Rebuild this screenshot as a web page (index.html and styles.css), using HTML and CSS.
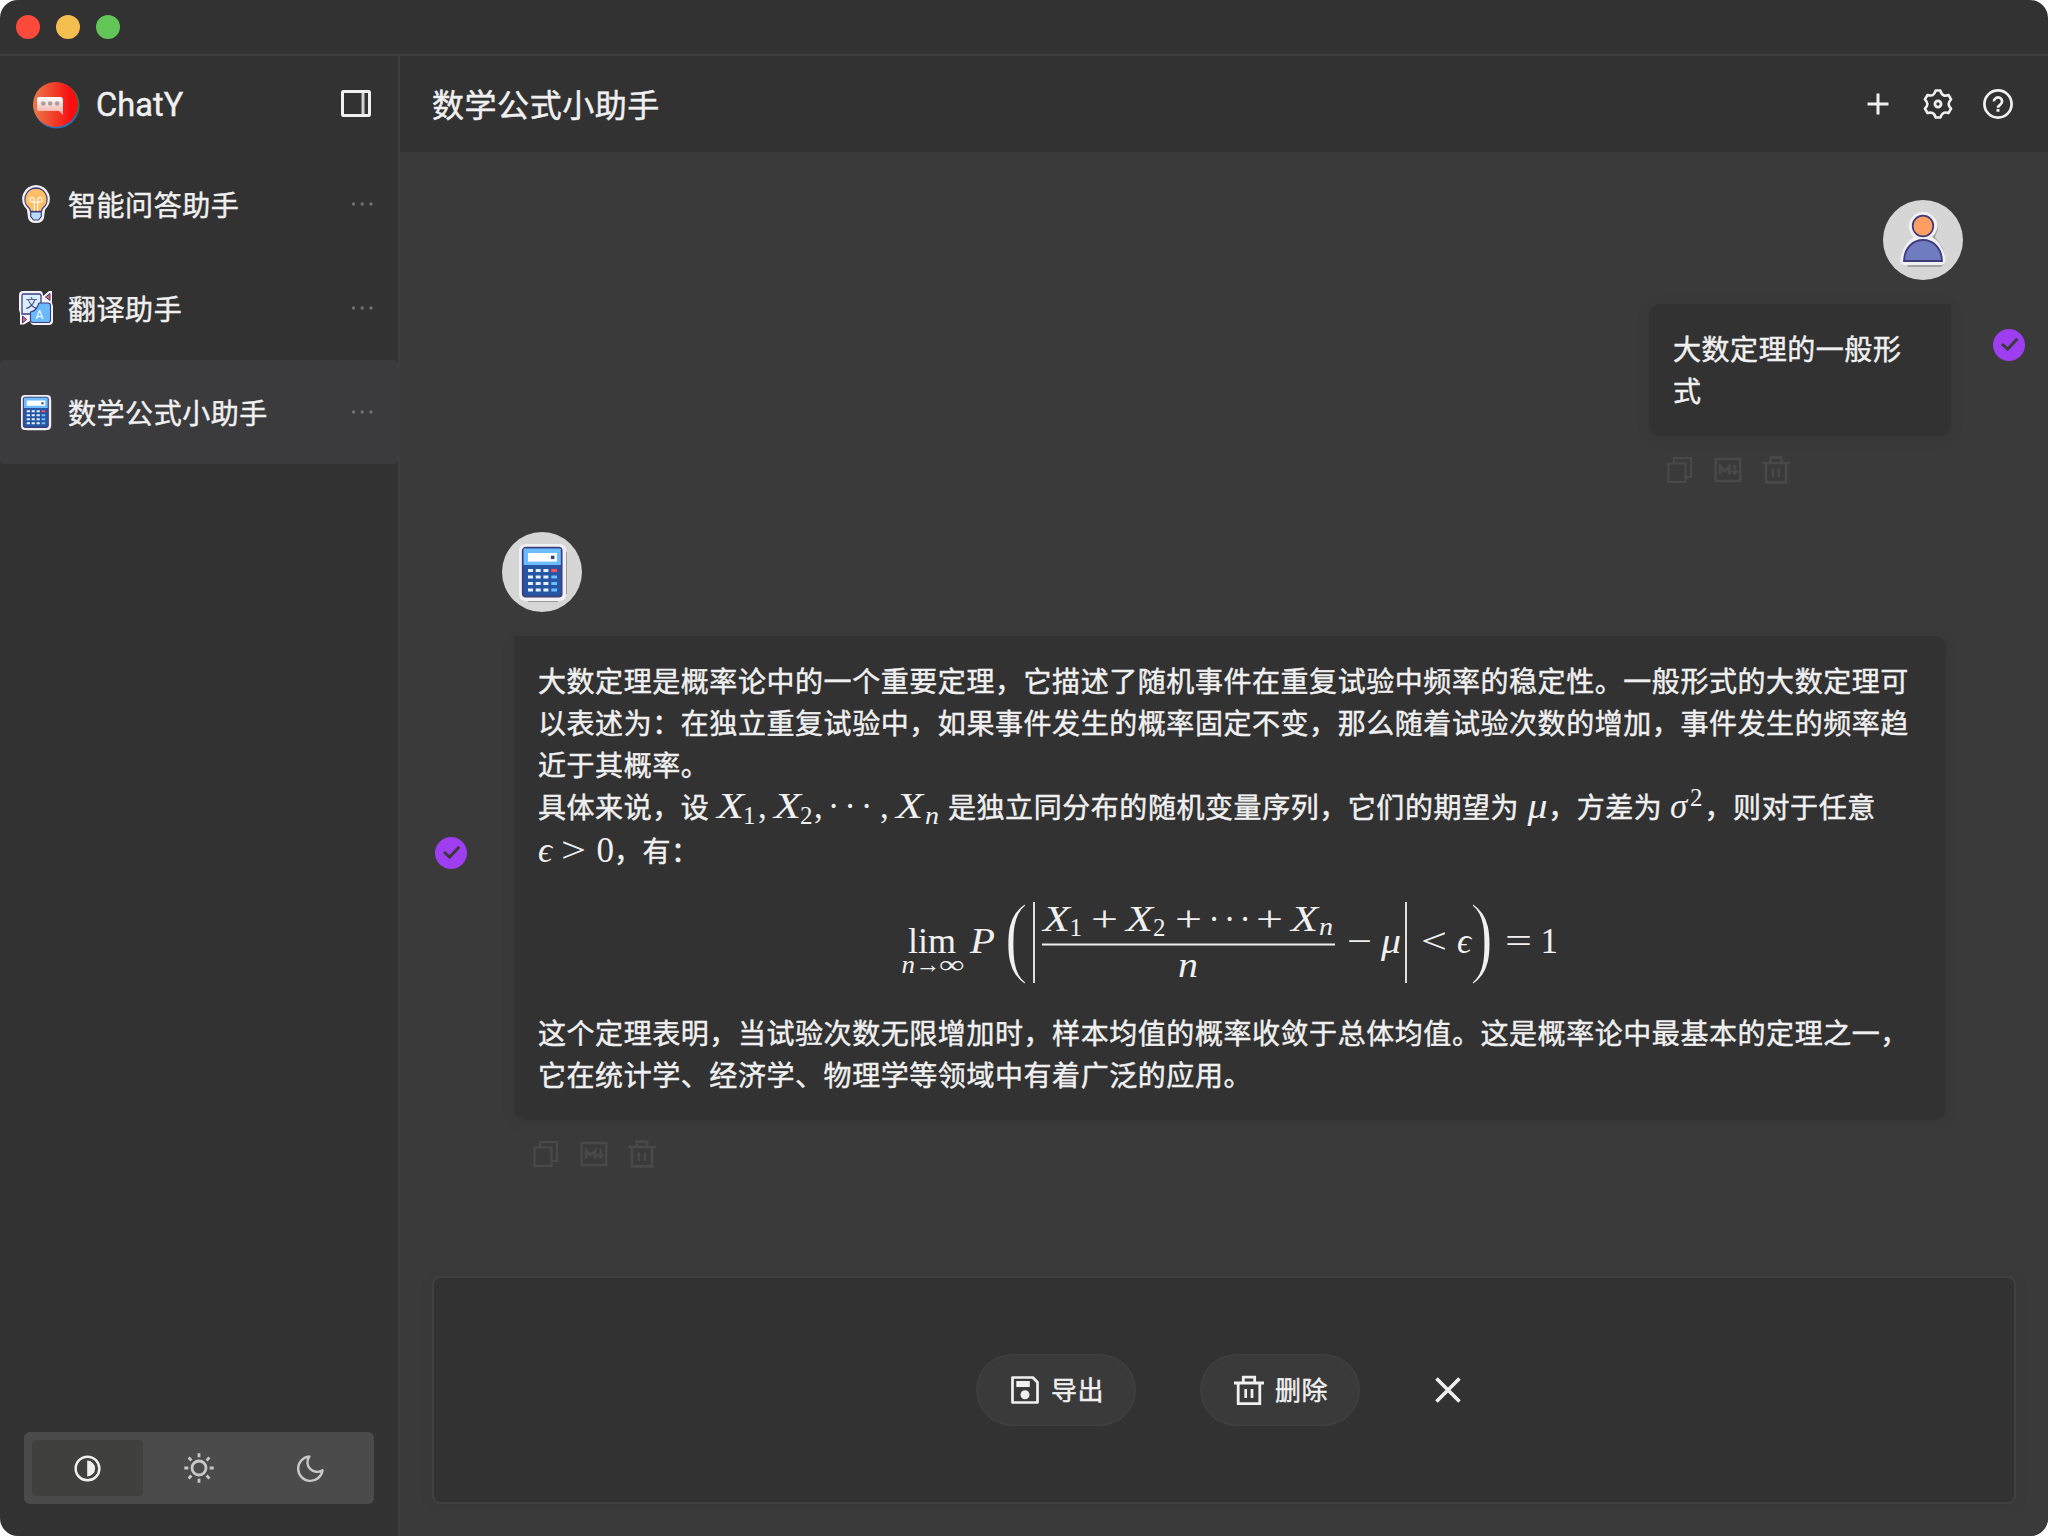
FILE: index.html
```html
<!DOCTYPE html>
<html lang="zh-CN">
<head>
<meta charset="utf-8">
<title>ChatY</title>
<link rel="stylesheet" href="styles.css">
</head>
<body>
<svg class="defs" width="0" height="0">
  <symbol id="calc" viewBox="0 0 48 60">
    <path fill="#9b9b9b" d="M9 56h30v2H9zM46 8h2v42h-2z"/>
    <rect x="0" y="0" width="47" height="57" rx="6" fill="#f1f1f5"/>
    <rect x="3.700" y="3.700" width="39" height="49" rx="3" fill="#2656a3" stroke="#3f3c7c" stroke-width="1.700"/>
    <path fill="#6cbcff" d="M4.600 4.600h37.200V21H4.600z"/>
    <rect x="9" y="9" width="29" height="8.600" fill="#fff"/>
    <rect x="32" y="11.700" width="3.400" height="3.400" fill="#3f3c7c"/>
    <path stroke="#e6f1ff" stroke-width="3.200" stroke-dasharray="5 2.700" d="M9 26.500h22M9 33h22M9 39.500h22M9 46h22"/>
    <path stroke="#6cbcff" stroke-width="3.200" d="M32.300 33H38M32.300 39.500H38M32.300 46H38"/>
    <path stroke="#ff5151" stroke-width="3.200" d="M32.300 26.500H38"/>
  </symbol>
  <symbol id="trash" viewBox="0 0 30 30">
    <path fill="none" stroke="currentColor" stroke-width="2.800" d="M0 7.500h30M4.200 7.500v20.700h21.600V7.500M9.300 7V1.600h11.400V7"/>
    <path stroke="currentColor" stroke-width="2.700" d="M11.700 13.500v9M18 13.500v9"/>
  </symbol>
  <symbol id="copy" viewBox="0 0 27 28">
    <path fill="none" stroke="currentColor" stroke-width="2.200" d="M2 7.500h17V26H2zM7.500 7V2h17v19H19.500"/>
  </symbol>
  <symbol id="markdown" viewBox="0 0 28 28">
    <rect x="1.600" y="3" width="24.600" height="22" fill="none" stroke="currentColor" stroke-width="2.500"/>
    <path fill="none" stroke="currentColor" stroke-width="2.900" d="M6.200 18.500v-8l4.500 4.500 4.500-4.500v8"/>
    <path fill="none" stroke="currentColor" stroke-width="2.300" d="M20.700 9v8M17.600 14.500l3.100 3.200 3.100-3.200"/>
  </symbol>
  <symbol id="more" viewBox="0 0 24 6">
    <g fill="currentColor"><circle cx="2.500" cy="3" r="1.700"/><circle cx="11.200" cy="3" r="1.700"/><circle cx="19.900" cy="3" r="1.700"/></g>
  </symbol>
  <symbol id="check" viewBox="0 0 32 32">
    <circle cx="16" cy="16" r="16" fill="#9e3ef0"/>
    <path d="M9 15l5.600 5.200 9.700-10.500" fill="none" stroke="#3a3a3a" stroke-width="3"/>
  </symbol>
</svg>

<div class="window">
  <header class="titlebar"><i class="light red"></i><i class="light yellow"></i><i class="light green"></i></header>
  <div class="body">
    <aside class="sidebar">
      <div class="brand">
        <svg class="logo" viewBox="0 0 48 48">
          <defs>
            <linearGradient id="lg" x1="0" x2="1"><stop offset="0" stop-color="#eb7a4a"/><stop offset=".5" stop-color="#f23b26"/><stop offset=".85" stop-color="#f90d10"/></linearGradient>
            <linearGradient id="rim" x1="0" y1="0" x2="0" y2="1"><stop offset="0" stop-color="#d63a28"/><stop offset=".3" stop-color="#1a8a4a"/><stop offset=".65" stop-color="#197a6a"/><stop offset=".85" stop-color="#2374bd"/></linearGradient>
            <linearGradient id="bub" x1="0" y1="0" x2="0" y2="1"><stop offset="0" stop-color="#fff"/><stop offset="1" stop-color="#f9a59c"/></linearGradient>
          </defs>
          <circle cx="24.500" cy="24.500" r="23" fill="url(#rim)"/>
          <circle cx="23.500" cy="23.500" r="22.500" fill="url(#lg)"/>
          <path fill="url(#bub)" d="M7 16h21q3 0 3 3v15l-4-4H7q-2 0-2-2V18q0-2 2-2z"/>
          <g fill="#a8a0a0"><circle cx="11.300" cy="22.500" r="2.300"/><circle cx="18.200" cy="22.500" r="2.300"/><circle cx="25.200" cy="22.500" r="2.300"/></g>
        </svg>
        <span class="brand-name">ChatY</span>
        <svg class="panel-icon" viewBox="0 0 30 27"><path d="M22 2v23" stroke="#d2d2d2" stroke-width="3"/><rect x="1.500" y="1.500" width="27" height="24" rx=".8" fill="none" stroke="#f0f0f0" stroke-width="3"/></svg>
      </div>
      <nav class="list">
        <div class="item">
          <span class="item-icon"><svg width="28" height="38" viewBox="0 0 28 38">
            <path fill="#f3f3f7" d="M14 0a14 14 0 0 1 9 24.700l-1 8Q21 38 14 38t-8-5.300l-1-8A14 14 0 0 1 14 0z"/>
            <path fill="#ffbf69" stroke="#3f3c7c" stroke-width="1.300" d="M14 3a11.300 11.300 0 0 1 6.500 20.400l-1 3h-11l-1-3A11.300 11.300 0 0 1 14 3z"/>
            <path fill="#b8dcf8" stroke="#3f3c7c" stroke-width="1.200" d="M8.700 27h10.600v4.500L16.500 35h-5l-2.800-3.500z"/>
            <path fill="none" stroke="#fff3df" stroke-width="1.200" d="M12.400 26V17.200M15.600 26V17.200M10 17.200h8"/>
            <circle cx="10" cy="14.700" r="2.300" fill="none" stroke="#fff3df" stroke-width="1.200"/><circle cx="18" cy="14.700" r="2.300" fill="none" stroke="#fff3df" stroke-width="1.200"/>
          </svg></span>
          <span class="item-name">智能问答助手</span><svg class="more"><use href="#more"/></svg>
        </div>
        <div class="item">
          <span class="item-icon"><svg width="34" height="34" viewBox="0 0 34 34">
            <path fill="#f3f3f7" d="M4 0h17q3 0 3 5l6-5h3v12l1 3v15q0 4-4 4H15q-3 0-4-4l-6 3.500H1V22L0 19V4q0-4 4-4z"/>
            <path fill="#d8efff" stroke="#3f3c7c" stroke-width="1.300" d="M4 3h16q2 0 2 2v8l-9 10H3V5q0-2 1-2z"/>
            <path fill="#69bbff" stroke="#3f3c7c" stroke-width="1.100" d="M20 12h9q2.500 0 2.500 2.500V29q0 2.500-2.500 2.500H14q-2.500 0-2.500-2.500v-8q6-1 8.500-9z"/>
            <path fill="#e4605e" stroke="#3f3c7c" stroke-width="1" d="M26.500 6L31 2.500v7zM3.500 25l4 3.500-4 3.500z"/>
            <text class="glyph dark" x="6.500" y="17">文</text><text class="glyph light-text" x="16.500" y="27.500">A</text>
          </svg></span>
          <span class="item-name">翻译助手</span><svg class="more"><use href="#more"/></svg>
        </div>
        <div class="item active">
          <span class="item-icon"><svg width="30" height="35" viewBox="0 0 47 57" preserveAspectRatio="none"><use href="#calc" width="48" height="60"/></svg></span>
          <span class="item-name">数学公式小助手</span><svg class="more"><use href="#more"/></svg>
        </div>
      </nav>
      <div class="themes">
        <span class="theme on"><svg viewBox="0 0 28 28"><circle cx="14" cy="14" r="12.300" fill="none" stroke="currentColor" stroke-width="2.600"/><path fill="currentColor" d="M13.700 5.800a8.200 8.200 0 0 1 0 16.400z"/></svg></span>
        <span class="theme"><svg class="sun" viewBox="0 0 30 30"><g fill="none" stroke="currentColor" stroke-width="2.800"><circle cx="15" cy="15" r="7"/><path d="M15 .3v4M15 25.700v4M.3 15h4M25.700 15h4M4.600 4.600l2.800 2.800M22.600 22.600l2.800 2.800M4.600 25.400l2.800-2.800M22.600 7.400l2.800-2.800"/></g></svg></span>
        <span class="theme"><svg viewBox="0 0 28 28"><path fill="none" stroke="currentColor" stroke-width="2.500" stroke-linejoin="round" d="M12.800 1.500A12.700 12.700 0 1 0 26.500 15.700 10 10 0 0 1 12.800 1.500z"/></svg></span>
      </div>
    </aside>

    <main class="main">
      <header class="topbar">
        <h1 class="title">数学公式小助手</h1>
        <svg class="tool" viewBox="0 0 30 30"><path d="M15 4.500v21M4.500 15h21" stroke="currentColor" stroke-width="3"/></svg>
        <svg class="tool" viewBox="0 0 30 30"><path fill="none" stroke="currentColor" stroke-width="2.600" stroke-linejoin="round" d="M12.700 1.500h4.600q1.200 3.800 3.200 4.700t5-.2l2.600 4.300Q25.600 12.800 25.600 15t2.500 4.700L25.500 24q-3.500-.9-5.200.1T17.300 28.500h-4.600q-1.200-3.800-3.200-4.500t-5 0l-2.600-4.300Q4.400 17.200 4.400 15T1.900 10.300L4.500 6q3.500.9 5.200.1t3-4.600z"/><circle cx="15" cy="15" r="3.100" fill="none" stroke="currentColor" stroke-width="2.700"/></svg>
        <svg class="tool" viewBox="0 0 30 30"><circle cx="15" cy="15" r="13.600" fill="none" stroke="currentColor" stroke-width="2.700"/><path fill="none" stroke="currentColor" stroke-width="2.700" d="M10.900 12.400a4.100 3.900 0 1 1 6.600 3c-1.700 1.200-2.500 1.700-2.500 3.300"/><path fill="currentColor" d="M13.500 20h3v2.800h-3z"/></svg>
      </header>

      <section class="chat">
        <article class="message mine">
          <div class="content">
            <div class="avatar"><svg width="48" height="56" viewBox="0 0 48 56">
              <path fill="#a2a2a2" d="M38 12l1 5-3 8 8 11 3 14-5 5H8z"/>
              <path fill="#f1f1f3" d="M24 0a14 14 0 0 1 9 25q11 6 14 24-1 4-5 4H6q-4 0-5-4Q4 31 15 25a14 14 0 0 1 9-25z"/>
              <circle cx="24" cy="14" r="10.300" fill="#ff9f63" stroke="#3f3c7c" stroke-width="1.700"/>
              <path fill="#707cc0" stroke="#3f3c7c" stroke-width="1.800" d="M5 49c1-28 37-28 38 0z"/>
            </svg></div>
            <div class="bubble">大数定理的一般形<br>式</div>
            <div class="actions"><svg><use href="#copy"/></svg><svg><use href="#markdown"/></svg><svg><use href="#trash"/></svg></div>
          </div>
          <svg class="check"><use href="#check"/></svg>
        </article>

        <article class="message bot">
          <svg class="check"><use href="#check"/></svg>
          <div class="content">
            <div class="avatar"><svg class="avatar-calc" width="48" height="60"><use href="#calc"/></svg></div>
            <div class="bubble">
              <p>大数定理是概率论中的一个重要定理，它描述了随机事件在重复试验中频率的稳定性。一般形式的大数定理可<br>以表述为：在独立重复试验中，如果事件发生的概率固定不变，那么随着试验次数的增加，事件发生的频率趋<br>近于其概率。</p>
              <p>具体来说，设<svg class="math" width="238.600" height="24"><g class="it"><text x="8" y="24" textLength="27" lengthAdjust="spacingAndGlyphs">X</text><text x="65" y="24" textLength="27" lengthAdjust="spacingAndGlyphs">X</text><text x="187" y="24" textLength="27" lengthAdjust="spacingAndGlyphs">X</text></g><g class="sub"><text x="34" y="30">1</text><text x="91" y="30">2</text><text class="it" x="216" y="30" textLength="14" lengthAdjust="spacingAndGlyphs">n</text></g><text x="49" y="24">,</text><text x="105" y="24">,</text><text x="171" y="24">,</text><text class="dots" x="124.600 141 157.600" y="24">···</text></svg>是独立同分布的随机变量序列，它们的期望为<svg class="math" width="29" height="24"><text class="it" x="8.500" y="24" textLength="20" lengthAdjust="spacingAndGlyphs">μ</text></svg>，方差为<svg class="math" width="42" height="24"><text class="it" x="8" y="24">σ</text><text class="sub" x="28" y="12">2</text></svg>，则对于任意</p>
              <p class="last-line"><svg class="math" width="76" height="24"><text class="it" x="0" y="24">ϵ</text><text x="23" y="24" textLength="25" lengthAdjust="spacingAndGlyphs">&gt;</text><text x="58.500" y="24">0</text></svg>，有：</p>
              <div class="formula">
                <svg class="math" width="656" height="90" viewBox="900 898 656 90">
                  <text x="908" y="953" textLength="48" lengthAdjust="spacingAndGlyphs">lim</text>
                  <text class="sub it" x="901.500" y="973" textLength="13.500" lengthAdjust="spacingAndGlyphs">n</text><text class="sub" x="915.500" y="973" textLength="25" lengthAdjust="spacingAndGlyphs">→</text><text class="sub" x="939" y="973" textLength="25.500" lengthAdjust="spacingAndGlyphs">∞</text>
                  <text class="it" x="970" y="953" textLength="25" lengthAdjust="spacingAndGlyphs">P</text>
                  <text class="paren" transform="translate(1004.500 965.500) scale(.77 1)">(</text>
                  <path class="rule" d="M1034 902v81M1406 902v81M1042 944.500h293"/>
                  <text class="it" x="1043" y="931" textLength="27" lengthAdjust="spacingAndGlyphs">X</text><text class="sub" x="1069.500" y="936">1</text>
                  <text x="1091" y="931" textLength="27" lengthAdjust="spacingAndGlyphs">+</text>
                  <text class="it" x="1126" y="931" textLength="27" lengthAdjust="spacingAndGlyphs">X</text><text class="sub" x="1153" y="936">2</text>
                  <text x="1175" y="931" textLength="27" lengthAdjust="spacingAndGlyphs">+</text>
                  <text class="dots" x="1214 1229.500 1245" y="931">···</text>
                  <text x="1256" y="931" textLength="27" lengthAdjust="spacingAndGlyphs">+</text>
                  <text class="it" x="1291" y="931" textLength="27" lengthAdjust="spacingAndGlyphs">X</text><text class="sub it" x="1319" y="935" textLength="14" lengthAdjust="spacingAndGlyphs">n</text>
                  <text class="it" x="1178" y="977" textLength="20" lengthAdjust="spacingAndGlyphs">n</text>
                  <text x="1347" y="953" textLength="25" lengthAdjust="spacingAndGlyphs">−</text>
                  <text class="it" x="1381" y="953" textLength="20" lengthAdjust="spacingAndGlyphs">μ</text>
                  <text x="1421" y="953" textLength="26" lengthAdjust="spacingAndGlyphs">&lt;</text>
                  <text class="it" x="1457" y="953">ϵ</text>
                  <text class="paren" transform="translate(1470 965.500) scale(.77 1)">)</text>
                  <text x="1505" y="953" textLength="27" lengthAdjust="spacingAndGlyphs">=</text>
                  <text x="1540.500" y="953">1</text>
                </svg>
              </div>
              <p>这个定理表明，当试验次数无限增加时，样本均值的概率收敛于总体均值。这是概率论中最基本的定理之一，<br>它在统计学、经济学、物理学等领域中有着广泛的应用。</p>
            </div>
            <div class="actions"><svg><use href="#copy"/></svg><svg><use href="#markdown"/></svg><svg><use href="#trash"/></svg></div>
          </div>
        </article>
      </section>

      <footer class="composer">
        <button class="pill"><svg width="28" height="28" viewBox="0 0 28 28"><path fill="none" stroke="currentColor" stroke-width="2.700" stroke-linejoin="round" d="M1.500 1.500h20.300l4.700 4.800v20.200h-25z"/><path fill="currentColor" d="M5.300 5h13.500v6H5.300z"/><circle cx="14" cy="18.700" r="4.500" fill="currentColor"/></svg><span>导出</span></button>
        <button class="pill delete"><svg width="30" height="31"><use href="#trash"/></svg><span>删除</span></button>
        <svg class="close" viewBox="0 0 26 26"><path d="M1.500 1.500l23 23M24.500 1.500l-23 23" stroke="currentColor" stroke-width="3.600"/></svg>
      </footer>
    </main>
  </div>
</div>
</body>
</html>
```
FILE: styles.css
```css
* { box-sizing: border-box; }
body {
  margin: 0;
  background: #fff;
  color: #f0f0f0;
  font-family: Roboto, "Noto Sans CJK SC", sans-serif;
  font-size: 28px;
  letter-spacing: .02em;
  text-spacing-trim: space-all;
  -webkit-text-stroke: .45px currentColor;
}
svg { display: block; flex: none; overflow: visible; }
.defs { position: absolute; }
p { margin: 0; }

.window {
  width: 2048px;
  height: 1536px;
  display: flex;
  flex-direction: column;
  overflow: hidden;
  border-radius: 18px;
  background: #323232;
}
.titlebar {
  display: flex;
  gap: 16px;
  height: 56px;
  padding: 15px 16px;
  border-bottom: 2px solid #3d3d3d;
}
.light { width: 24px; height: 24px; border-radius: 50%; }
.red { background: #fc4b3a; }
.yellow { background: #f5bf50; }
.green { background: #62c656; }
.body { display: flex; flex: 1; min-height: 0; }

/* Sidebar */
.sidebar {
  width: 400px;
  display: flex;
  flex-direction: column;
  border-right: 2px solid #3d3d3d;
}
.brand {
  display: flex;
  align-items: center;
  height: 96px;
  padding: 1px 27px 0 32px;
}
.logo { width: 48px; height: 48px; }
.brand-name { margin-left: 16px; padding-top: 1px; font-size: 32.500px; letter-spacing: .1px; }
.panel-icon { width: 30px; height: 27px; margin: 0 0 2px auto; }
.list { flex: 1; }
.item {
  display: flex;
  align-items: center;
  height: 104px;
  padding: 0 23px 0 16px;
  border-radius: 4px;
}
.item.active { background: #3b3b3d; }
.item-icon { width: 40px; display: flex; justify-content: center; }
.item-name { flex: 1; margin-left: 12px; }
.more { width: 24px; height: 6px; color: #707070; }
.glyph { font-size: 12px; letter-spacing: 0; }
.dark { fill: #3f3c7c; -webkit-text-stroke: .3px #3f3c7c; }
.light-text { fill: #fff; }
.themes {
  display: flex;
  height: 72px;
  margin: 0 24px 32px;
  padding: 8px;
  border-radius: 6px;
  background: #4b4b4b;
}
.theme {
  flex: 1;
  display: grid;
  place-items: center;
  border-radius: 4px;
  color: #c8c8c8;
}
.theme svg { width: 27px; height: 27px; }
.theme .sun { width: 30px; height: 30px; }
.theme.on { background: #40403e; color: #f0f0f0; }

/* Conversation */
.main {
  flex: 1;
  min-width: 0;
  display: flex;
  flex-direction: column;
  background: #3a3a3a;
}
.topbar {
  display: flex;
  align-items: center;
  gap: 30px;
  height: 96px;
  padding: 0 35px 1px 32px;
  background: #323232;
}
.title { flex: 1; margin: 0; padding-bottom: 1px; font-size: 32px; font-weight: 400; }
.tool { width: 30px; height: 30px; }
.chat { flex: 1; padding: 48px 23px 0 35px; }
.message { display: flex; align-items: center; }
.message.mine { justify-content: flex-end; gap: 30px; margin-bottom: 48px; }
.message.bot { gap: 35px; }
.check { width: 32px; height: 32px; margin-top: 5px; }
.content { display: flex; flex-direction: column; align-items: flex-start; }
.mine .content { width: 314px; }
.mine .avatar { align-self: flex-end; }
.avatar {
  width: 80px;
  height: 80px;
  display: grid;
  place-items: center;
  border-radius: 50%;
  background: #d6d6d6;
}
.avatar-calc { margin: 3px 0 0 2px; }
.bubble {
  margin-top: 24px;
  padding: 26px 24px 22px;
  line-height: 42px;
  white-space: nowrap;
  border-radius: 12px;
  background: #323232;
  box-shadow: 0 2px 16px rgba(0, 0, 0, .07);
}
.mine .bubble { width: 302px; border-top-right-radius: 2px; }
.bot .bubble { width: 1432px; height: 484px; margin-left: 12px; border-top-left-radius: 2px; }
.actions { display: flex; gap: 20px; height: 28px; margin-top: 20px; color: #494949; }
.actions svg { width: 28px; height: 28px; }
.mine .actions { margin-left: 17px; }
.bot .actions { margin-left: 30px; }

/* Math */
.math {
  display: inline-block;
  vertical-align: baseline;
  fill: currentColor;
  font-family: "Liberation Serif", "DejaVu Serif", serif;
  font-size: 35px;
  letter-spacing: 0;
}
.it { font-style: italic; }
.sub { font-size: 25px; }
.dots { text-anchor: middle; }
.paren { font-size: 91px; -webkit-text-stroke: 0; stroke: #323232; stroke-width: 2px; }
.rule { stroke: currentColor; stroke-width: 1.800; }
.last-line { margin-top: 2px; }
.formula { height: 140px; padding: 24px 0 0 362px; line-height: 0; }

/* Selection bar */
.composer {
  display: flex;
  align-items: center;
  height: 228px;
  margin: 0 32px 32px;
  padding-left: 542px;
  border: 2px solid #404040;
  border-radius: 8px;
  background: #323232;
  box-shadow: 0 2px 16px rgba(0, 0, 0, .06);
}
.pill {
  display: flex;
  align-items: center;
  gap: 12px;
  width: 160px;
  height: 72px;
  margin-right: 64px;
  padding: 0 0 0 33px;
  border: 2px solid #3e3e3e;
  border-radius: 36px;
  background: #3a3a3a;
  color: inherit;
  font: inherit;
  font-size: 26px;
  letter-spacing: .02em;
}
.pill span { padding-bottom: 3px; }
.pill.delete { gap: 11px; padding-left: 32px; }
.close { width: 26px; height: 26px; margin-left: 11px; }
```
